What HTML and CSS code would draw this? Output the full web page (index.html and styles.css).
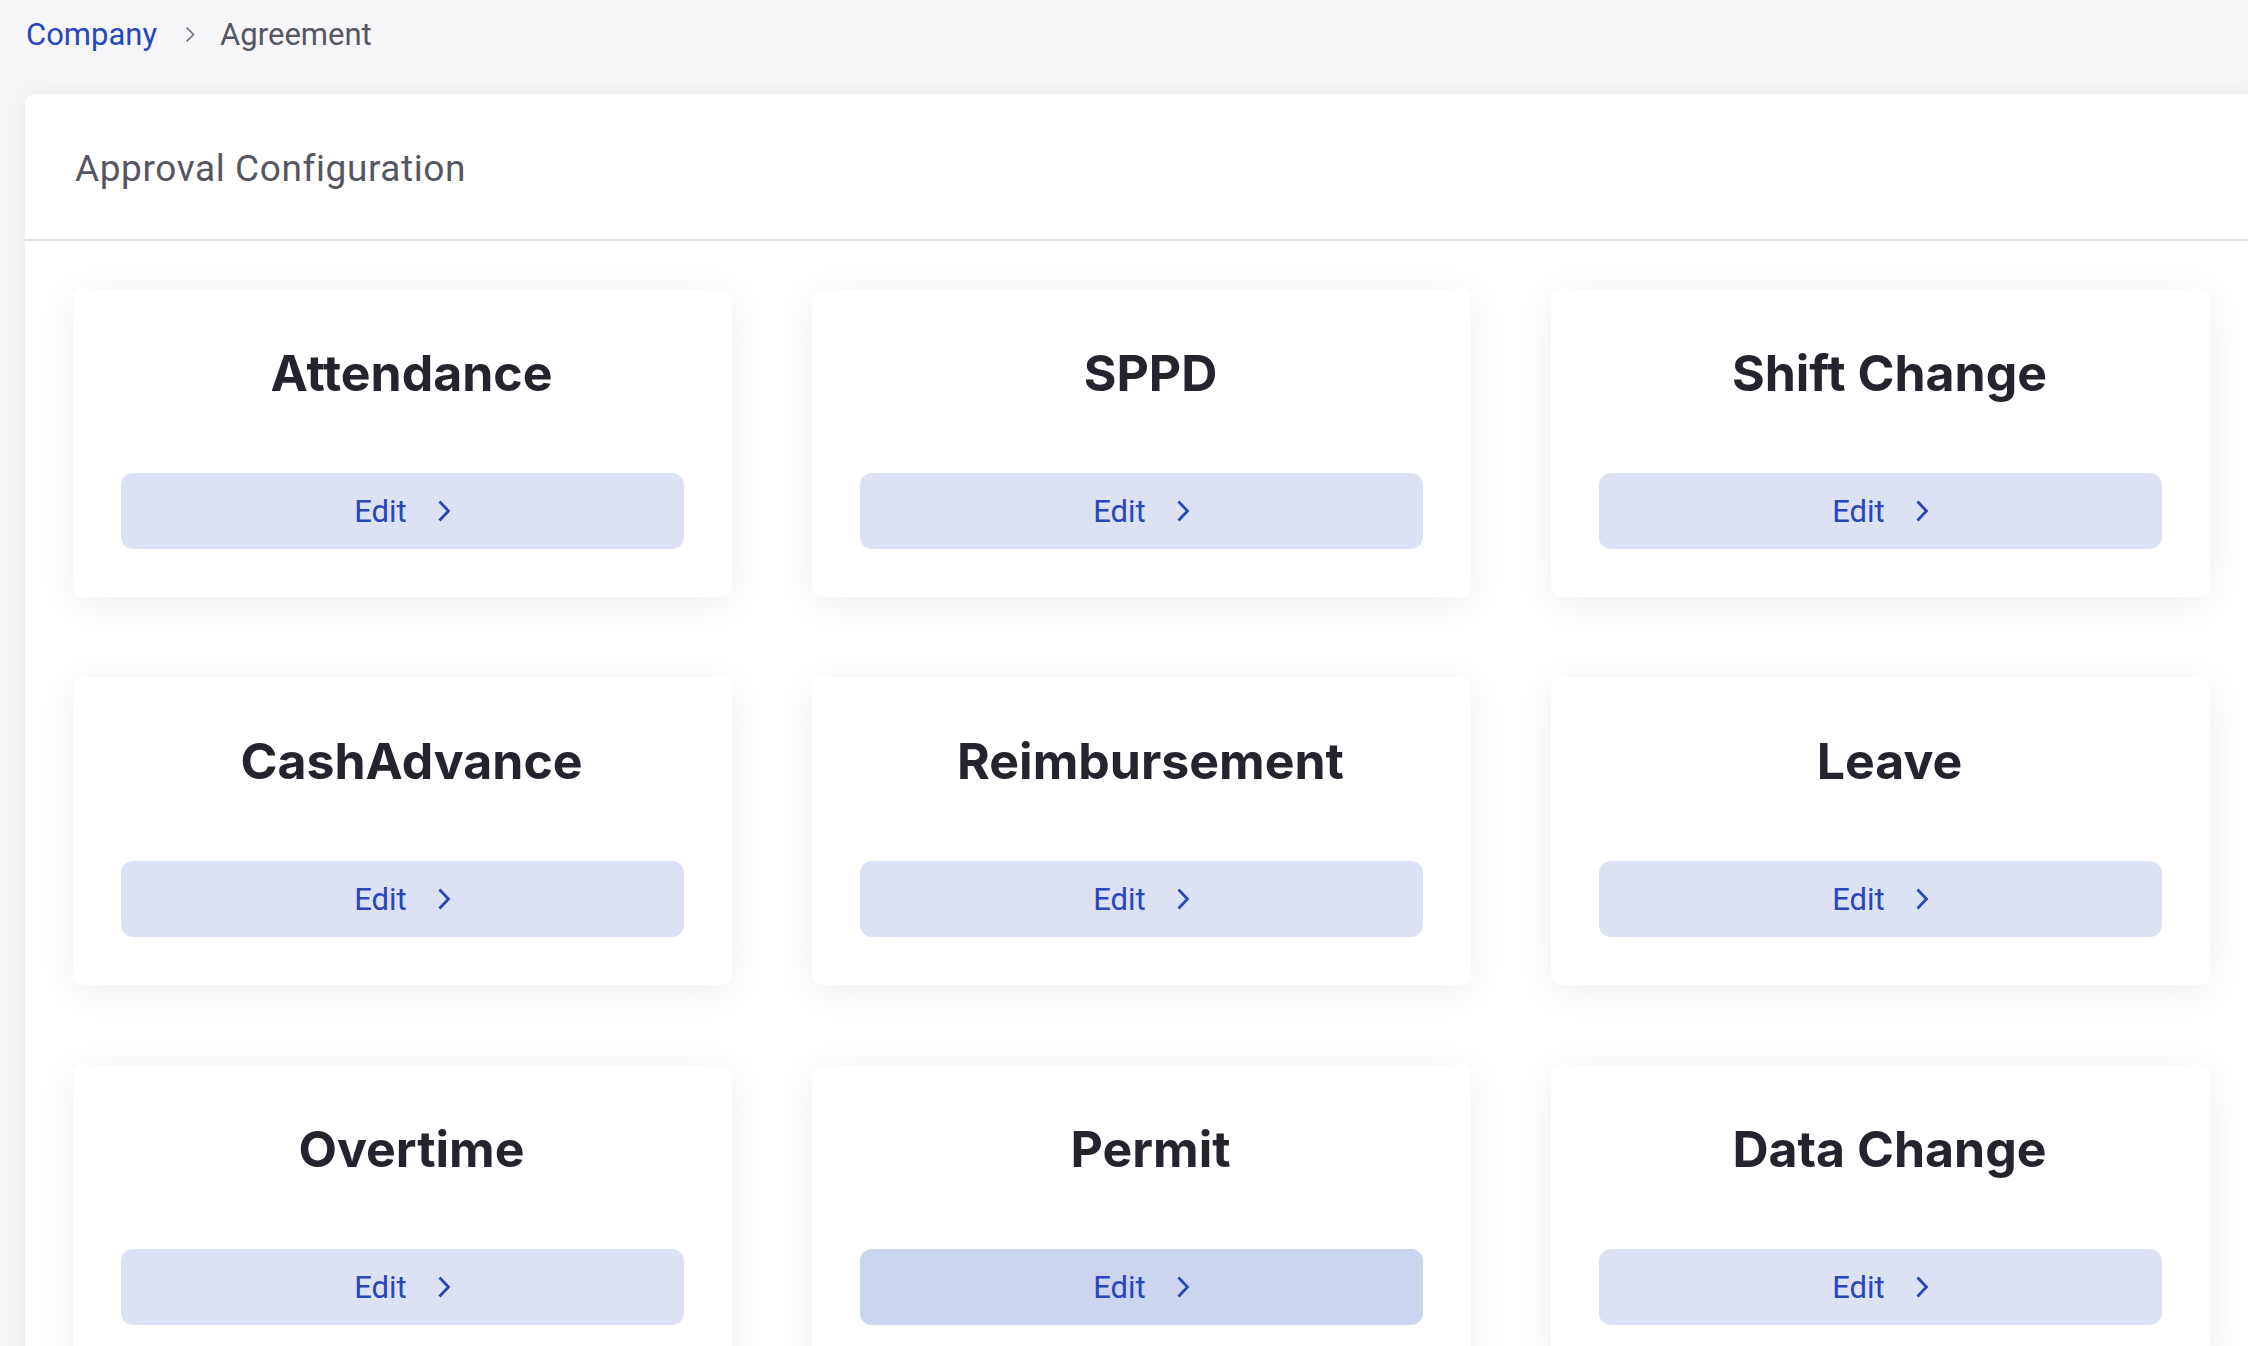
FILE: index.html
```html
<!DOCTYPE html>
<html lang="en">
<head>
    <meta charset="UTF-8">
    <meta name="viewport" content="width=device-width, initial-scale=1.0">
    <title>Approval Configuration</title>
    <link rel="stylesheet" href="styles.css">
</head>
<body>
    <nav class="breadcrumb">
        <a href="#" class="crumb-link">Company</a>
        <svg class="crumb-sep" width="10" height="17" viewBox="0 0 10 17"><path d="M1.5 1.5 L8.5 8.5 L1.5 15.5" fill="none" stroke="#6b6b75" stroke-width="1.6"/></svg>
        <span class="crumb-current">Agreement</span>
    </nav>

    <div class="panel">
        <div class="panel-header">
            <h2>Approval Configuration</h2>
        </div>

        <div class="card-grid">
            <div class="card">
                <h3>Attendance</h3>
                <button class="edit-btn">Edit <svg width="14" height="22" viewBox="0 0 14 22"><path d="M2.5 1.5 L11.5 11 L2.5 20.5" fill="none" stroke="currentColor" stroke-width="2.8"/></svg></button>
            </div>
            <div class="card">
                <h3>SPPD</h3>
                <button class="edit-btn">Edit <svg width="14" height="22" viewBox="0 0 14 22"><path d="M2.5 1.5 L11.5 11 L2.5 20.5" fill="none" stroke="currentColor" stroke-width="2.8"/></svg></button>
            </div>
            <div class="card">
                <h3>Shift Change</h3>
                <button class="edit-btn">Edit <svg width="14" height="22" viewBox="0 0 14 22"><path d="M2.5 1.5 L11.5 11 L2.5 20.5" fill="none" stroke="currentColor" stroke-width="2.8"/></svg></button>
            </div>
            <div class="card">
                <h3>CashAdvance</h3>
                <button class="edit-btn">Edit <svg width="14" height="22" viewBox="0 0 14 22"><path d="M2.5 1.5 L11.5 11 L2.5 20.5" fill="none" stroke="currentColor" stroke-width="2.8"/></svg></button>
            </div>
            <div class="card">
                <h3>Reimbursement</h3>
                <button class="edit-btn">Edit <svg width="14" height="22" viewBox="0 0 14 22"><path d="M2.5 1.5 L11.5 11 L2.5 20.5" fill="none" stroke="currentColor" stroke-width="2.8"/></svg></button>
            </div>
            <div class="card">
                <h3>Leave</h3>
                <button class="edit-btn">Edit <svg width="14" height="22" viewBox="0 0 14 22"><path d="M2.5 1.5 L11.5 11 L2.5 20.5" fill="none" stroke="currentColor" stroke-width="2.8"/></svg></button>
            </div>
            <div class="card">
                <h3>Overtime</h3>
                <button class="edit-btn">Edit <svg width="14" height="22" viewBox="0 0 14 22"><path d="M2.5 1.5 L11.5 11 L2.5 20.5" fill="none" stroke="currentColor" stroke-width="2.8"/></svg></button>
            </div>
            <div class="card">
                <h3>Permit</h3>
                <button class="edit-btn hover">Edit <svg width="14" height="22" viewBox="0 0 14 22"><path d="M2.5 1.5 L11.5 11 L2.5 20.5" fill="none" stroke="currentColor" stroke-width="2.8"/></svg></button>
            </div>
            <div class="card">
                <h3>Data Change</h3>
                <button class="edit-btn">Edit <svg width="14" height="22" viewBox="0 0 14 22"><path d="M2.5 1.5 L11.5 11 L2.5 20.5" fill="none" stroke="currentColor" stroke-width="2.8"/></svg></button>
            </div>
        </div>
    </div>
</body>
</html>
```

FILE: styles.css
```css
:root {
    --bg-color: #f7f7f9;
    --text-color: #24242f;
    --muted-color: #565662;
    --accent-color: #2947b8;
    --button-bg: #dce2f4;
    --button-hover: #cbd5ef;
}

body {
    font-family: 'Roboto', 'Liberation Sans', sans-serif;
    background-color: var(--bg-color);
    color: var(--text-color);
    margin: 0;
    padding: 0;
    overflow-x: hidden;
}

.breadcrumb {
    display: flex;
    align-items: center;
    height: 66px;
    box-sizing: border-box;
    padding: 3px 26px 0;
    margin-bottom: 28px;
    font-size: 31px;
    line-height: 38px;
}

.crumb-link {
    color: #2546c0;
    text-decoration: none;
}

.crumb-sep {
    margin: 0 25px 0 28px;
}

.crumb-current {
    color: var(--muted-color);
}

.panel {
    margin: 0 -12px 0 25px;
    background-color: #fff;
    border-radius: 10px 0 0 0;
    box-shadow: 0 0 24px rgba(30, 30, 60, 0.06);
}

.panel-header {
    height: 147px;
    box-sizing: border-box;
    padding: 3px 0 0 50px;
    display: flex;
    align-items: center;
    border-bottom: 2px solid #e2e2e4;
}

.panel-header h2 {
    margin: 0;
    font-size: 37px;
    letter-spacing: 0.6px;
    font-weight: 400;
    color: var(--muted-color);
}

.card-grid {
    display: grid;
    grid-template-columns: repeat(3, 659px);
    gap: 80px;
    padding: 48px;
}

.card {
    height: 308px;
    box-sizing: border-box;
    padding: 48px;
    display: flex;
    flex-direction: column;
    justify-content: space-between;
    background-color: #fff;
    border-radius: 10px;
    box-shadow: 0 6px 40px rgba(0, 0, 0, 0.07);
}

.card h3 {
    margin: 6px 0 0;
    padding-left: 18px;
    font-family: 'Inter', 'Roboto', sans-serif;
    font-size: 50px;
    line-height: 60px;
    font-weight: 700;
    text-align: center;
    color: var(--text-color);
}

.edit-btn {
    height: 76px;
    display: flex;
    justify-content: center;
    align-items: center;
    gap: 30px;
    border: none;
    border-radius: 12px;
    background-color: var(--button-bg);
    color: var(--accent-color);
    font-family: 'Roboto', sans-serif;
    font-size: 31px;
    cursor: pointer;
}

.edit-btn:hover,
.edit-btn.hover {
    background-color: var(--button-hover);
}
```
